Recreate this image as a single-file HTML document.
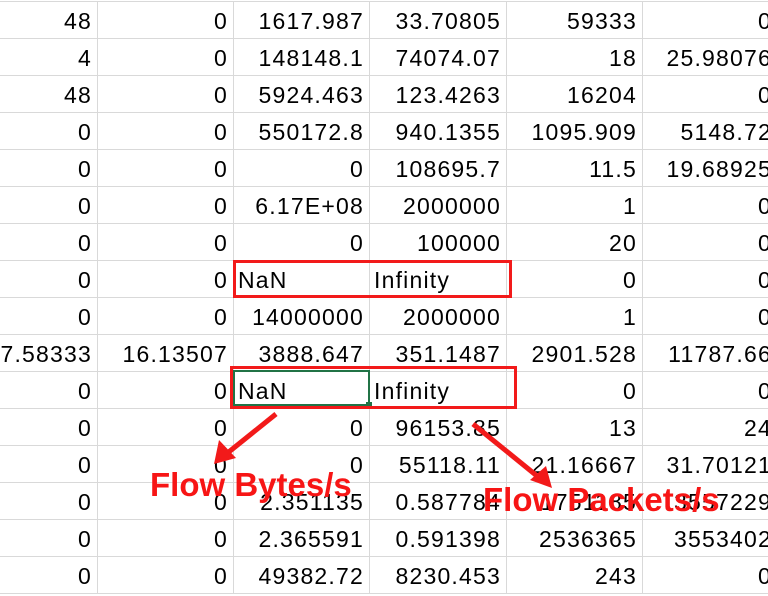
<!DOCTYPE html>
<html><head><style>
body{margin:0;width:768px;height:596px;overflow:hidden;background:#fff;position:relative;font-family:"Liberation Sans",sans-serif}
table{position:absolute;left:-39px;top:1px;border-collapse:collapse;table-layout:fixed;width:816px}
td{height:37px;border:1px solid #d9d9d9;text-align:right;padding:3px 5px 0 0;font-size:23px;letter-spacing:1.2px;color:#000;white-space:nowrap;overflow:hidden;line-height:33px;box-sizing:border-box}
td.l{text-align:left;padding-left:4px;overflow:visible}
.box{position:absolute;border:3px solid #f21a1a;box-sizing:border-box}
.lbl{position:absolute;color:#f71515;font-weight:bold;font-size:33px;white-space:nowrap}
</style></head><body>
<table>
<colgroup><col style="width:136px"><col style="width:136px"><col style="width:136px"><col style="width:137px"><col style="width:136px"><col style="width:135px"></colgroup>
<tr><td>48</td><td>0</td><td>1617.987</td><td>33.70805</td><td>59333</td><td>0</td></tr>
<tr><td>4</td><td>0</td><td>148148.1</td><td>74074.07</td><td>18</td><td>25.98076</td></tr>
<tr><td>48</td><td>0</td><td>5924.463</td><td>123.4263</td><td>16204</td><td>0</td></tr>
<tr><td>0</td><td>0</td><td>550172.8</td><td>940.1355</td><td>1095.909</td><td>5148.72</td></tr>
<tr><td>0</td><td>0</td><td>0</td><td>108695.7</td><td>11.5</td><td>19.68925</td></tr>
<tr><td>0</td><td>0</td><td>6.17E+08</td><td>2000000</td><td>1</td><td>0</td></tr>
<tr><td>0</td><td>0</td><td>0</td><td>100000</td><td>20</td><td>0</td></tr>
<tr><td>0</td><td>0</td><td class="l">NaN</td><td class="l">Infinity</td><td>0</td><td>0</td></tr>
<tr><td>0</td><td>0</td><td>14000000</td><td>2000000</td><td>1</td><td>0</td></tr>
<tr><td>37.58333</td><td>16.13507</td><td>3888.647</td><td>351.1487</td><td>2901.528</td><td>11787.66</td></tr>
<tr><td>0</td><td>0</td><td class="l">NaN</td><td class="l">Infinity</td><td>0</td><td>0</td></tr>
<tr><td>0</td><td>0</td><td>0</td><td>96153.85</td><td>13</td><td>24</td></tr>
<tr><td>0</td><td>0</td><td>0</td><td>55118.11</td><td>21.16667</td><td>31.70121</td></tr>
<tr><td>0</td><td>0</td><td>2.351135</td><td>0.587784</td><td>1751185</td><td>3557229</td></tr>
<tr><td>0</td><td>0</td><td>2.365591</td><td>0.591398</td><td>2536365</td><td>3553402</td></tr>
<tr><td>0</td><td>0</td><td>49382.72</td><td>8230.453</td><td>243</td><td>0</td></tr>
</table>
<div style="position:absolute;left:233px;top:370px;width:137px;height:36px;border:2px solid #217346;box-sizing:border-box"></div>
<div style="position:absolute;left:366px;top:402px;width:6px;height:6px;background:#217346"></div>
<div class="box" style="left:233px;top:260px;width:279px;height:38px"></div>
<div class="box" style="left:230px;top:366px;width:287px;height:43px"></div>
<svg style="position:absolute;left:0;top:0" width="768" height="596">
<g stroke="#f21a1a" stroke-width="5" fill="#f21a1a">
<line x1="276" y1="414" x2="225" y2="455"/>
<polygon points="214,464 219,440 236,458" stroke="none"/>
<line x1="473" y1="424" x2="542" y2="480"/>
<polygon points="552,488 530,480 546,466" stroke="none"/>
</g></svg>
<div class="lbl" style="left:150px;top:466px">Flow Bytes/s</div>
<div class="lbl" style="left:483px;top:481px">Flow Packets/s</div>
</body></html>
